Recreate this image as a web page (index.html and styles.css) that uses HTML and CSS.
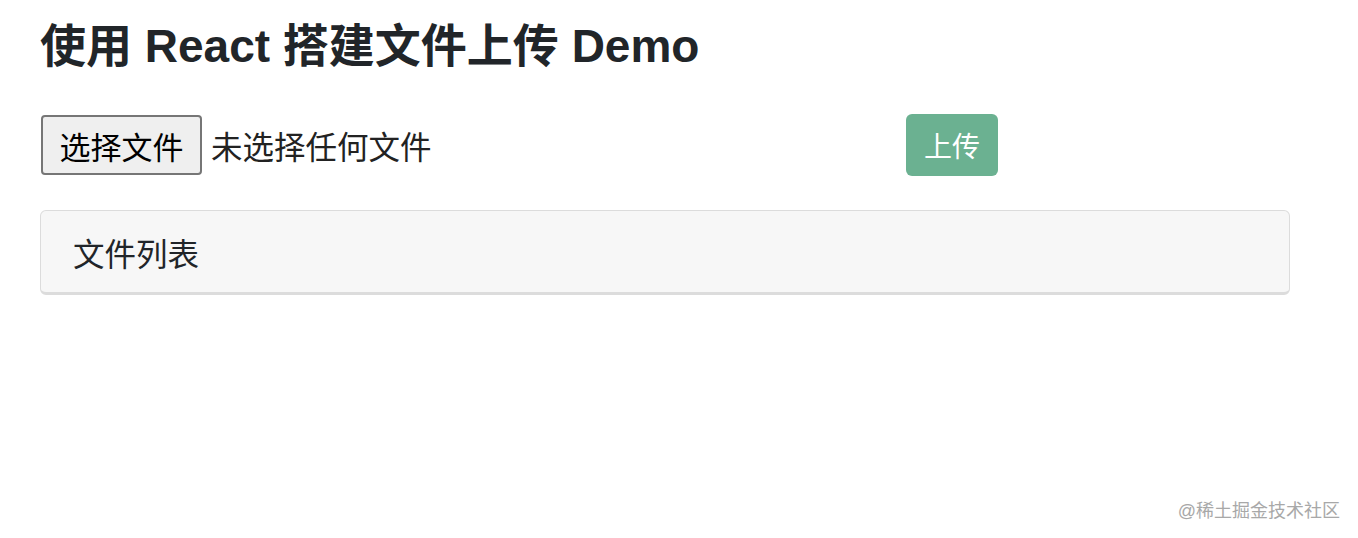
FILE: index.html
```html
<!DOCTYPE html>
<html>
<head>
	<title>React 文件上传 Demo</title>
	<meta charset="utf-8">
	<meta name="viewport" content="width=device-width, initial-scale=1">

	<link rel="stylesheet" href="styles.css">
</head>

<body>

	<div id="page-container">

		<h1 class="title">使用 React 搭建文件上传 Demo</h1>

		<div id="upload-row">
			<div class="file-picker">
				<label class="file-button" for="file-input">选择文件</label>
				<span class="file-name">未选择任何文件</span>
				<input type="file" id="file-input">
			</div>
			<button class="upload" disabled>上传</button>
		</div>

		<div class="card">
			<div class="card-header">文件列表</div>
		</div>

	</div>

	<div class="watermark">@稀土掘金技术社区</div>

</body>
</html>
```

FILE: styles.css
```css
* {
	margin: 0;
	padding: 0;
	box-sizing: border-box;
}

body {
	font-family: "Liberation Sans", "Noto Sans CJK SC", sans-serif;
	color: #212529;
	background-color: white;
	height: 538px;
	position: relative;
}

#page-container {
	padding: 16px 40px 0px 40px;
	width: 1330px;
}

	.title {
		font-size: 46px;
		font-weight: bold;
		line-height: 60px;
		color: #212529;
	}

	#upload-row {
		display: flex;
		align-items: center;
		margin-top: 38px;
	}

		.file-picker {
			display: flex;
			align-items: center;
			width: 866px;
		}

			.file-button {
				display: flex;
				align-items: center;
				justify-content: center;
				height: 60px;
				width: 161px;
				margin-left: 1px;
				border: 2px solid #767676;
				border-radius: 4px;
				background-color: #efefef;
				color: black;
				font-size: 31px;
			}

			.file-name {
				margin-left: 9px;
				font-size: 31.5px;
				color: #222;
			}

			#file-input {
				display: none;
			}

		.upload {
			height: 62px;
			width: 92px;
			border: none;
			border-radius: 6px;
			background-color: #6bb191;
			color: white;
			font-family: inherit;
			font-size: 28px;
		}

	.card {
		margin-top: 34px;
		border: 1px solid #dcdcdc;
		border-bottom-width: 3px;
		border-radius: 6px;
		background-color: #f7f7f7;
	}

		.card-header {
			height: 81px;
			padding-left: 32px;
			display: flex;
			align-items: center;
			font-size: 31.5px;
			color: #212529;
		}

.watermark {
	position: absolute;
	right: 18px;
	bottom: 16px;
	font-size: 18px;
	color: #a8a8a8;
}
```
